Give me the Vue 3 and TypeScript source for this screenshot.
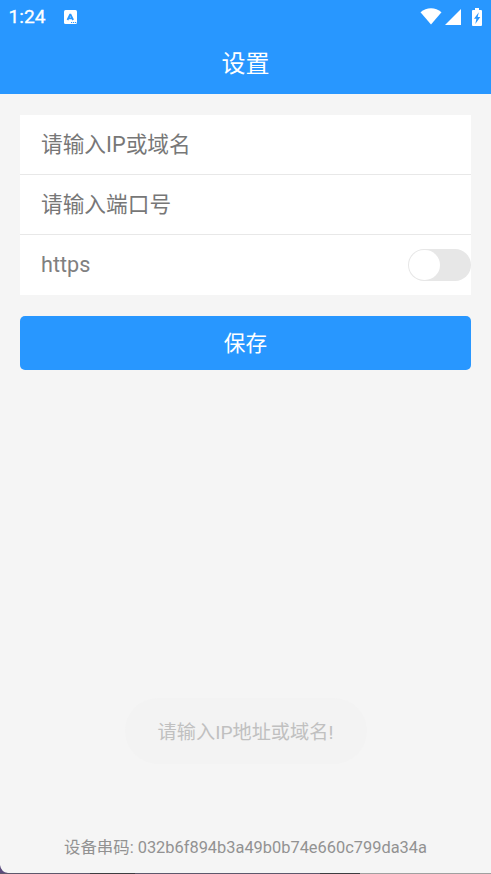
<script setup lang="ts">
import { ref } from 'vue'

const host = ref('')
const port = ref('')
const https = ref(false)
const serial = '032b6f894b3a49b0b74e660c799da34a'
</script>

<template>
  <div class="screen">
    <header class="top">
      <div class="status">
        <span class="time">1:24</span>
        <svg class="ime" width="13" height="14" viewBox="0 0 13 14">
          <rect width="13" height="14" rx="1.5" fill="#fff" />
          <path d="M3.5 10 6.3 4.2 9.1 10M4.4 8.4H8.2" fill="none" stroke="#2897ff" stroke-width="1.8" stroke-linejoin="bevel" />
          <path d="M7 12.5h1.2M9 12.5h1.2M11 12.5h1.2" stroke="#2897ff" stroke-width="1.2" />
        </svg>
        <span class="spacer"></span>
        <svg class="wifi" width="22" height="17" viewBox="0 0 22 17">
          <path d="M.5 4.2Q5.2.2 11 .2T21.5 4.2L11 16.5Z" fill="#fff" />
        </svg>
        <svg class="signal" width="16" height="16" viewBox="0 0 16 16">
          <path d="M16 0V16H0Z" fill="#fff" />
        </svg>
        <svg class="battery" width="10" height="18" viewBox="0 0 10 18">
          <path d="M3 0H7V2H9Q10 2 10 3V17Q10 18 9 18H1Q0 18 0 17V3Q0 2 1 2H3Z" fill="#fff" />
          <path d="M6.8 4.2 2 10.8H4.4L3.3 16 8.3 9.1H5.7Z" fill="#2897ff" />
        </svg>
      </div>
      <h1 class="title">设置</h1>
    </header>

    <main class="content">
      <div class="panel">
        <div class="row"><input v-model="host" class="field" placeholder="请输入IP或域名" /></div>
        <div class="row"><input v-model="port" class="field" placeholder="请输入端口号" /></div>
        <div class="row last">
          <span class="label">https</span>
          <button class="switch" :class="{ on: https }" role="switch" :aria-checked="https" @click="https = !https">
            <span class="knob"></span>
          </button>
        </div>
      </div>
      <button class="save">保存</button>
    </main>

    <div class="toast">请输入IP地址或域名!</div>
    <footer class="serial">设备串码: {{ serial }}</footer>
    <svg class="edge" width="491" height="10" viewBox="0 0 491 10">
      <path d="M0 1Q1 8 8 9H0Z" fill="#5b4b7c" />
      <path d="M0 9H360V10H0Z" fill="#5d586c" />
      <path d="M90 9H135V10H90ZM320 9H360V10H320Z" fill="#3d3c40" />
      <path d="M360 9H491V10H360Z" fill="#a0a0a0" />
    </svg>
  </div>
</template>

<style>
body {
  margin: 0;
  background: #f5f5f5;
}
</style>

<style scoped>
.screen {
  box-sizing: border-box;
  display: flex;
  flex-direction: column;
  width: 491px;
  height: 874px;
  overflow: hidden;
  background: #f5f5f5;
  font-family: Roboto, "Noto Sans CJK SC", sans-serif;
}
.top {
  flex: none;
  height: 94px;
  background: #2897ff;
  color: #fff;
}
.status {
  display: flex;
  align-items: center;
  box-sizing: border-box;
  height: 33px;
  padding: 0 9px 0 8.5px;
}
.time {
  width: 55.5px;
  font-size: 19.2px;
  font-weight: 400;
  line-height: 32px;
  -webkit-text-stroke: 0.3px #fff;
}
.spacer {
  flex: 1;
}
.wifi {
  margin-right: 3px;
}
.signal {
  margin-right: 11px;
}
.title {
  margin: 0;
  font-size: 24px;
  font-weight: 400;
  line-height: 62px;
  text-align: center;
}
.content {
  padding: 21px 20.5px 0 20.3px;
}
.panel {
  background: #fff;
}
.row {
  display: flex;
  align-items: center;
  justify-content: space-between;
  box-sizing: border-box;
  height: 60px;
  padding-left: 20.7px;
  border-bottom: 1px solid #e8e8e8;
}
.last {
  border-bottom: 0;
}
.field {
  flex: 1;
  min-width: 0;
  height: 50px;
  padding: 0;
  border: 0;
  outline: 0;
  background: none;
  font: 21.7px Roboto, "Noto Sans CJK SC", sans-serif;
}
.field::placeholder {
  color: #777;
  opacity: 1;
}
.label {
  padding-bottom: 2px;
  color: #808080;
  font-size: 21.6px;
}
.switch {
  display: flex;
  box-sizing: border-box;
  width: 62.5px;
  height: 32.5px;
  margin-bottom: 0.5px;
  padding: 1px;
  border: 0;
  border-radius: 17px;
  background: #e7e7e7;
}
.switch.on {
  justify-content: flex-end;
  background: #2897ff;
}
.knob {
  width: 30.5px;
  height: 30.5px;
  border-radius: 50%;
  background: #fff;
}
.save {
  display: block;
  width: 100%;
  height: 54.5px;
  margin-top: 20.5px;
  padding: 0 0 3px;
  border: 0;
  border-radius: 5px;
  background: #2897ff;
  color: #fff;
  font: 21.6px Roboto, "Noto Sans CJK SC", sans-serif;
}
.toast {
  align-self: center;
  box-sizing: border-box;
  width: 242px;
  height: 66px;
  margin-top: 328px;
  padding-top: 2px;
  border-radius: 33px;
  background: #f3f3f3;
  color: #c0c0c0;
  font-size: 19.2px;
  line-height: 66px;
  text-align: center;
}
.serial {
  margin-top: 72px;
  color: #929292;
  font-size: 16.4px;
  line-height: 24px;
  text-align: center;
}
.edge {
  flex: none;
  display: block;
  margin-top: auto;
}
</style>
